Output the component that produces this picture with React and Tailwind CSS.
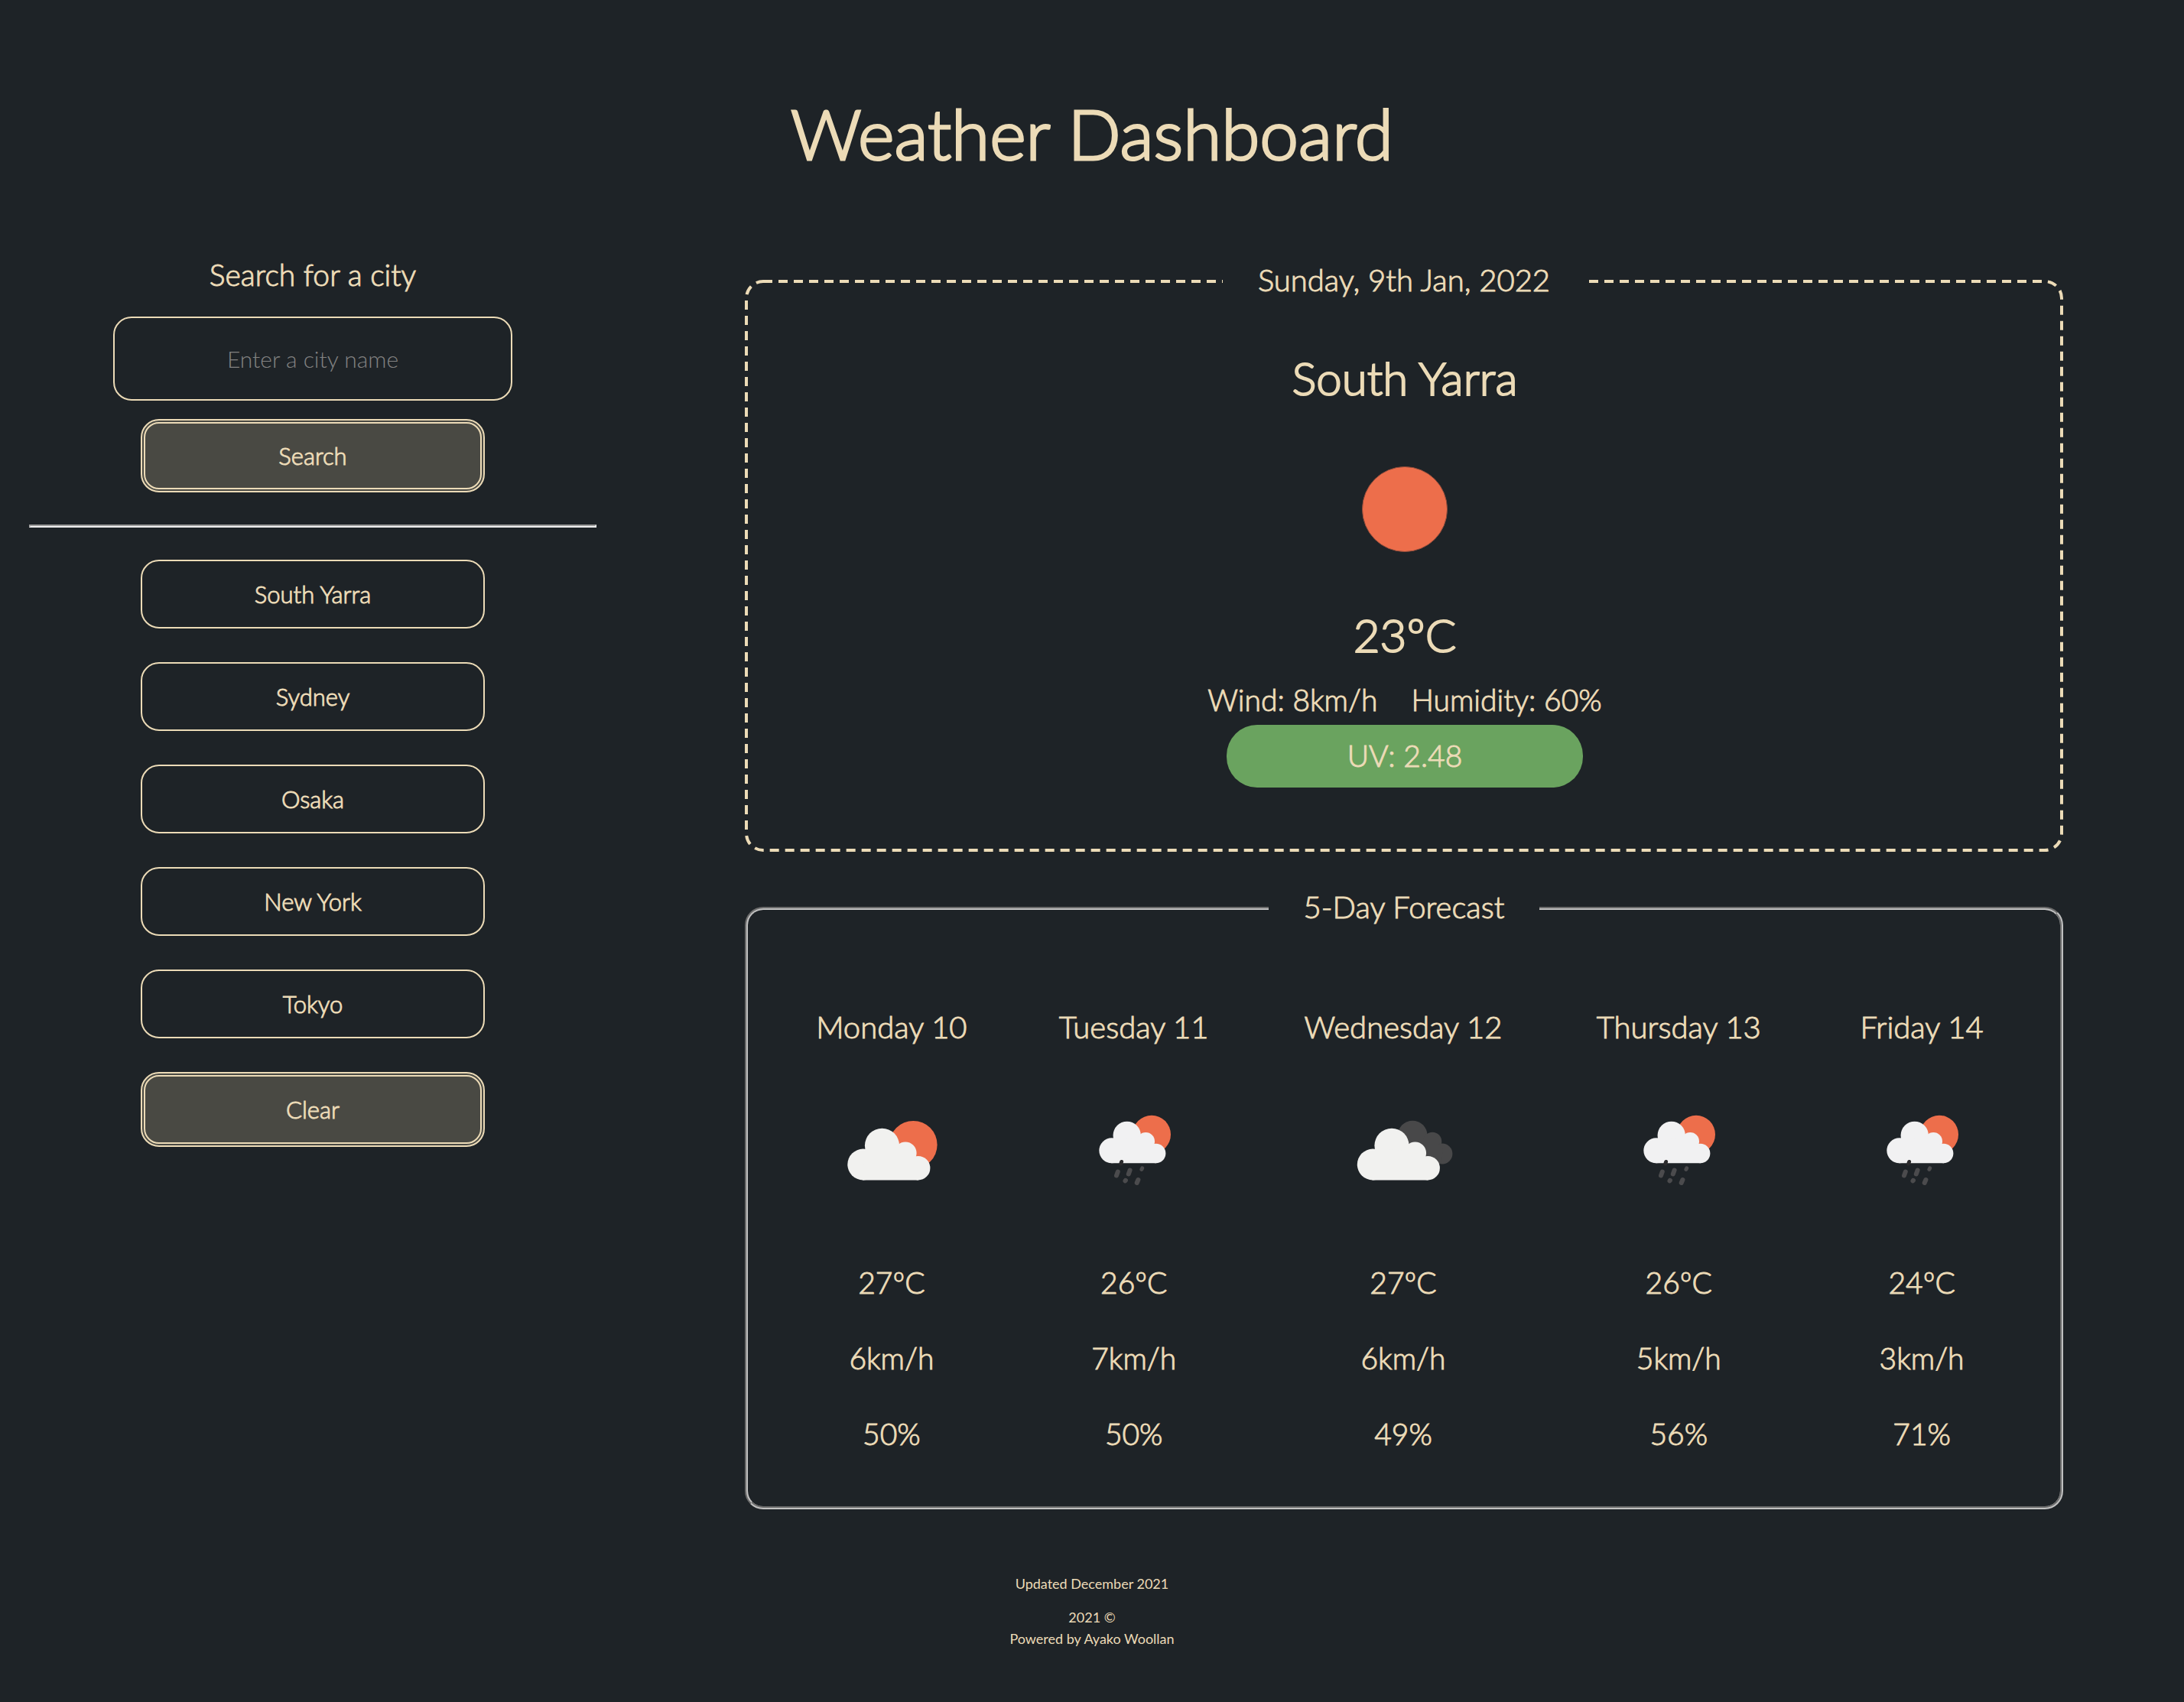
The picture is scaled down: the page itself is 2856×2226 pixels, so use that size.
import React from 'react'

const cities = ['South Yarra', 'Sydney', 'Osaka', 'New York', 'Tokyo']

const forecast = [
  { day: 'Monday 10', icon: 'partly', temp: '27ºC', wind: '6km/h', humidity: '50%' },
  { day: 'Tuesday 11', icon: 'rain', temp: '26ºC', wind: '7km/h', humidity: '50%' },
  { day: 'Wednesday 12', icon: 'clouds', temp: '27ºC', wind: '6km/h', humidity: '49%' },
  { day: 'Thursday 13', icon: 'rain', temp: '26ºC', wind: '5km/h', humidity: '56%' },
  { day: 'Friday 14', icon: 'rain', temp: '24ºC', wind: '3km/h', humidity: '71%' },
]

function FrontCloud({ fill = '#f1f1ef' }) {
  return (
    <g fill={fill}>
      <circle cx="62.7" cy="118" r="20.4" />
      <circle cx="87.5" cy="93.3" r="22.6" />
      <circle cx="118" cy="103" r="14.6" />
      <circle cx="134.6" cy="122.7" r="15.8" />
      <path d="M62 138.4H135V120L122 100L104 100L80 98L64 110Z" />
    </g>
  )
}

function WeatherIcon({ kind, label }) {
  return (
    <svg viewBox="0 0 200 200" className="size-[200px]" role="img" aria-label={label}>
      {kind === 'sun' && <circle cx="100" cy="100" r="55.5" fill="#ed6e4b" stroke="#8f4c3b" strokeWidth="1" />}
      {kind === 'partly' && (
        <>
          <circle cx="128.3" cy="92.2" r="31.3" fill="#ed6e4b" />
          <FrontCloud />
        </>
      )}
      {kind === 'clouds' && (
        <g transform="translate(1.5 0)">
          <g fill="#484849">
            <circle cx="110.7" cy="80" r="19.3" />
            <circle cx="136.6" cy="88" r="12.2" />
            <circle cx="149.5" cy="104" r="13.4" />
            <path d="M100 84H136L150 96L149 117L110 116Z" />
          </g>
          <g transform="translate(-4 0)">
            <FrontCloud />
          </g>
        </g>
      )}
      {kind === 'rain' && (
        <>
          <circle cx="123" cy="78.8" r="25" fill="#ed6e4b" />
          <g transform="translate(20.3 4.8) scale(0.805)">
            <FrontCloud fill="#f1f1f2" />
          </g>
          <g stroke="#4b4b4d" strokeWidth="6" strokeLinecap="round" fill="none">
            <path d="M83.6 114.5L82.8 117" stroke="#2b2b2d" strokeWidth="5" />
            <path d="M78.8 127.5L77 132.5" />
            <path d="M94.6 125.5L92.8 130.5" />
            <path d="M110.7 122.8L109.9 124.4" strokeWidth="5" />
            <path d="M88.9 138.8L88.5 139.4" />
            <path d="M105.4 138L103.7 142" />
          </g>
        </>
      )}
    </svg>
  )
}

/* Frame with longer dashes than the CSS dashed border gives. */
function DashedFrame() {
  return (
    <svg
      aria-hidden="true"
      className="pointer-events-none absolute top-[25px] left-0 h-[calc(100%-25px)] w-full text-[#ecdbb7] [&>rect]:h-[calc(100%-4px)] [&>rect]:w-[calc(100%-4px)]"
    >
      <rect x="2" y="2" rx="22" fill="none" stroke="currentColor" strokeWidth="4" strokeDasharray="12 8" />
    </svg>
  )
}

const solidButton =
  'w-[450px] rounded-3xl border-[6px] border-double border-[#ecdbb7] bg-[#494943] text-[31px]'

export default function App() {
  return (
    <div className="min-h-screen bg-[#1e2327] pt-[114px] pb-[70px] text-center font-['Lato',sans-serif] text-[39px] leading-[54px] font-light text-[#ecdbb7] [-webkit-text-stroke-width:1px]">
      <h1 className="text-[91px] leading-[120px] [-webkit-text-stroke-width:3px]">Weather Dashboard</h1>

      <div className="mt-[95px] grid grid-cols-[818fr_2038fr]">
        <aside className="flex flex-col items-center px-[38px]">
          <label htmlFor="city" className="leading-[60px]">
            Search for a city
          </label>
          <input
            id="city"
            type="text"
            placeholder="Enter a city name"
            className="mt-[25px] h-[110px] w-[522px] rounded-3xl border-2 border-[#ecdbb7] bg-transparent text-center text-[30px] placeholder:text-[#828282] [-webkit-text-stroke-width:0]"
          />
          <button type="submit" className={`${solidButton} mt-6 h-[96px]`}>
            Search
          </button>
          <hr className="my-[42px] w-full border-2 border-[#eeeeee] [border-style:inset]" />
          <div className="flex flex-col gap-[44px]">
            {cities.map((c) => (
              <button
                key={c}
                type="button"
                className="h-[90px] w-[450px] rounded-3xl border-2 border-[#ecdbb7] text-[31px]"
              >
                {c}
              </button>
            ))}
            <button type="button" className={`${solidButton} h-[98px]`}>
              Clear
            </button>
          </div>
        </aside>

        <main className="mt-3 pr-[158px] pl-[156px]">
          <div className="relative">
            <DashedFrame />
            <fieldset className="pb-[84px]">
              <legend className="relative mx-auto h-[54px] bg-[#1e2327] px-[46px] text-[40px] leading-[50px]">
                Sunday, 9th Jan, 2022
              </legend>
              <div className="flex flex-col items-center pt-[59px] pl-[2px]">
                <h2 className="text-[60px] leading-[80px] [-webkit-text-stroke-width:2px]">South Yarra</h2>
                <div className="mt-8">
                  <WeatherIcon kind="sun" label="Clear sky" />
                </div>
                <p className="mt-6 text-[60px] leading-[80px] [-webkit-text-stroke-width:2px]">23ºC</p>
                <div className="mt-[18px] flex gap-11">
                  <p>Wind: 8km/h</p>
                  <p>Humidity: 60%</p>
                </div>
                <p className="mt-[6px] w-[466px] rounded-[40px] bg-[#6aa35f] pb-[2px] leading-[80px]">UV: 2.48</p>
              </div>
            </fieldset>
          </div>

          <fieldset className="mt-[47px] rounded-3xl border-4 border-[#c0c0c0] pb-[68px] [border-style:groove]">
            <legend className="mx-auto h-[54px] px-[46px] text-[40px] leading-[50px]">5-Day Forecast</legend>
            <div className="grid grid-cols-[314fr_320fr_385fr_336fr_300fr] px-[31px] pt-[101px]">
              {forecast.map((f) => (
                <section key={f.day} className="flex flex-col items-center gap-[45px]">
                  <div className="flex flex-col items-center gap-[35px]">
                    <h3 className="text-[40px] whitespace-nowrap">{f.day}</h3>
                    <WeatherIcon kind={f.icon} label={f.icon} />
                  </div>
                  <p>{f.temp}</p>
                  <p>{f.wind}</p>
                  <p>{f.humidity}</p>
                </section>
              ))}
            </div>
          </fieldset>
        </main>
      </div>

      <footer className="mt-[83px] text-[18px] leading-7 font-normal [-webkit-text-stroke-width:0]">
        <p>Updated December 2021</p>
        <p className="mt-4">
          2021 ©<br />
          Powered by Ayako Woollan
        </p>
      </footer>
    </div>
  )
}
